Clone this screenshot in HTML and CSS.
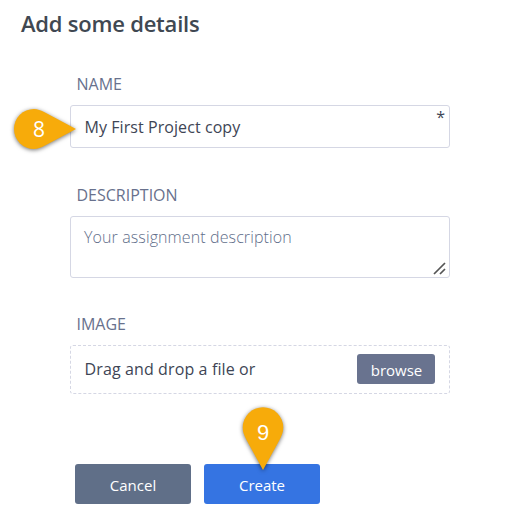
FILE: index.html
```html
<!DOCTYPE html>
<html lang="en">
<head>
<meta charset="utf-8">
<title>Add some details</title>
<link rel="stylesheet" href="styles.css">
</head>
<body>
<main class="page">
  <h1 class="title">Add some details</h1>
  <form class="form">
    <div class="label">NAME</div>
    <div class="field name-field"><span class="value">My First Project copy</span><span class="required">*</span>
      <div class="callout callout-left">
        <svg width="76" height="56" viewBox="0 0 76 56"><path d="M70 28L39.500 11.800C34.500 9.200 31.500 8 28 8A20 20 0 0 0 28 48C31.500 48 34.500 46.800 39.500 44.200Z"/></svg>
        <span class="digit">8</span>
      </div>
    </div>
    <div class="label">DESCRIPTION</div>
    <div class="field area"><span class="placeholder">Your assignment description</span>
      <svg class="grip" width="13" height="13" viewBox="0 0 13 13"><path d="M1 12L12 1M7 12L12 7"/></svg>
    </div>
    <div class="label">IMAGE</div>
    <div class="field drop"><span class="drop-text">Drag and drop a file or</span><button type="button" class="browse">browse</button></div>
    <div class="actions">
      <button type="button" class="button cancel">Cancel</button>
      <button type="button" class="button create">Create</button>
      <div class="callout callout-down">
        <svg width="56" height="78" viewBox="0 0 56 78"><path d="M28 71L11.500 41C9 36 7.700 33 7.700 28.500A20.300 20.300 0 0 1 48.300 28.500C48.300 33 47 36 44.500 41Z"/></svg>
        <span class="digit">9</span>
      </div>
    </div>
  </form>
</main>
</body>
</html>
```

FILE: styles.css
```css
* { box-sizing: border-box; }
body { margin: 0; background: #fff; font-family: "Open Sans", sans-serif; font-size: 16px; color: #3e4555; }
.page { height: 530px; padding-top: 7px; overflow: hidden; }
.title { margin: 0 0 0 21px; font-size: 22px; line-height: 32px; font-weight: 600; color: #404852; letter-spacing: -0.22px; }
.form { width: 380px; margin: 34px 0 0 70px; }
.label { height: 32px; padding-left: 6.500px; line-height: 22px; color: #68718d; font-weight: 400; }
.field { position: relative; border: 1px solid #d5d7e4; border-radius: 3px; padding-left: 13.500px; }
.name-field { height: 43px; margin-bottom: 36px; line-height: 43px; }
.value { letter-spacing: .07px; }
.required { position: absolute; right: 4px; top: 0; line-height: 22px; }
.area { height: 62px; margin-bottom: 35px; padding-left: 13px; line-height: 41px; }
.placeholder { font-weight: 300; color: #5f6e8a; letter-spacing: .11px; }
.grip { position: absolute; right: 3px; bottom: 2px; fill: none; stroke: #555; stroke-width: 1.700; }
.drop { display: flex; align-items: center; justify-content: space-between; height: 49px; padding: 0 14px 1px 13.500px; border-style: dashed; }
.drop-text { letter-spacing: .12px; }
.browse { width: 78px; height: 30px; padding: 2px 0 0 1px; border: 0; border-radius: 3px; background: #69738f; color: #fff; font: 15px/22px "Open Sans", sans-serif; }
.actions { position: relative; display: flex; gap: 13px; margin: 70px 0 0 5px; }
.button { width: 116px; height: 40px; padding: 2px 0 0; border: 0; border-radius: 3px; color: #fff; font: 15px/22px "Open Sans", sans-serif; }
.cancel { background: #606f88; }
.create { background: #3574e2; }
.callout { position: absolute; }
.callout svg { display: block; fill: #f7ab0a; filter: drop-shadow(0 1px 2px rgba(0, 0, 0, .55)); }
.callout-left { left: -65px; top: -5px; }
.callout-down { left: 160px; top: -65px; }
.digit { position: absolute; color: #fff; font: 22px/24px "Liberation Sans", sans-serif; }
.callout-left .digit { left: 27px; top: 16px; font: 21px/24px "Open Sans", sans-serif; }
.callout-down .digit { left: 22px; top: 22px; }
```
